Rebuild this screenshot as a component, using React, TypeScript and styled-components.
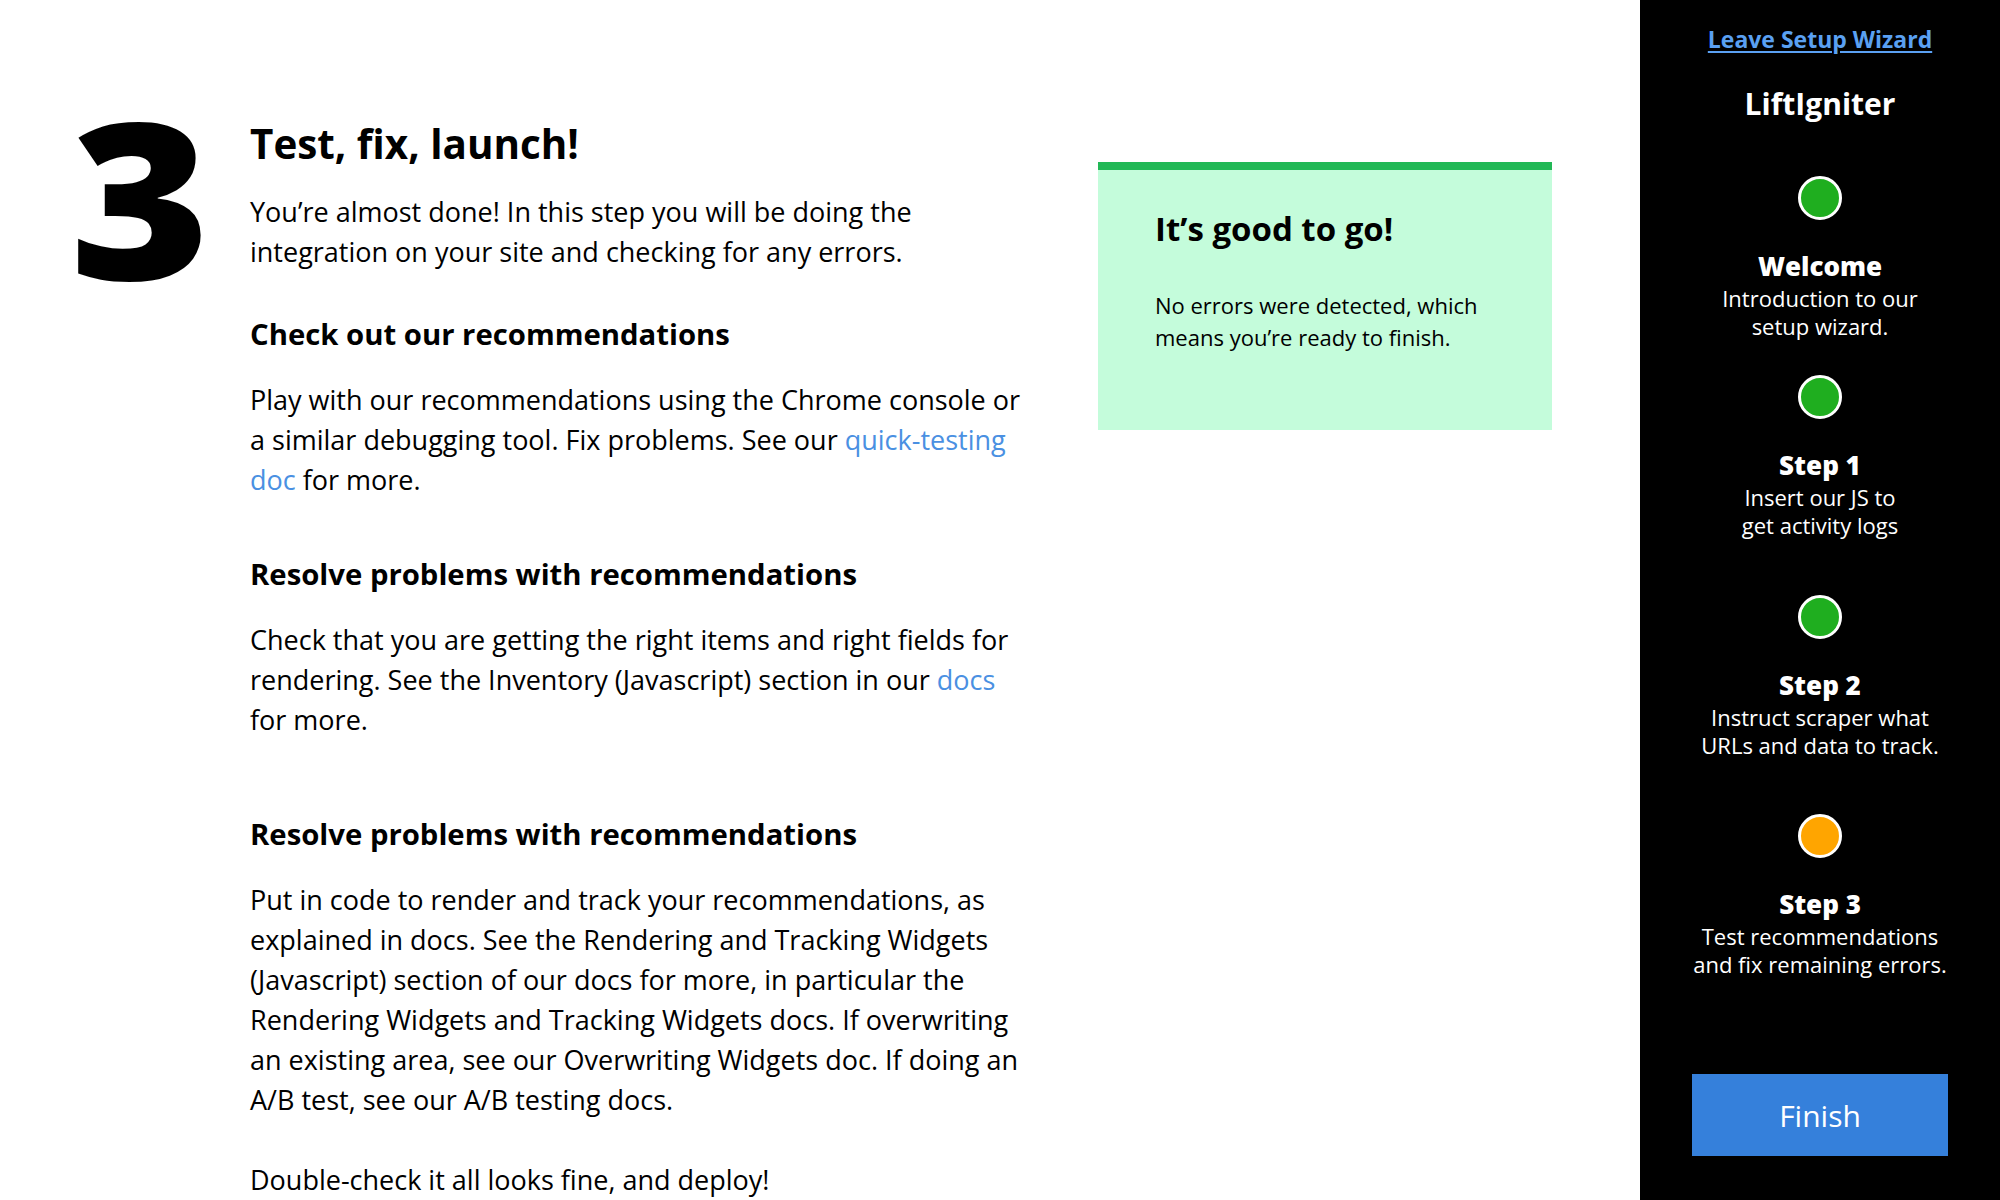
import React from 'react'
import styled, {createGlobalStyle} from 'styled-components'

const GlobalStyle = createGlobalStyle`
  html, body {
    margin: 0;
    padding: 0;
    background: #fff;
  }
  body {
    font-family: 'Open Sans', 'Liberation Sans', sans-serif;
    color: #000;
  }
`

const Page = styled.div`
  display: flex;
  width: 2000px;
  height: 1200px;
  overflow: hidden;
`

/* Left: the step content */

const Main = styled.main`
  flex: 1;
  display: flex;
  align-items: flex-start;
  padding: 85px 0 0 70px;
`

const StepNumber = styled.div`
  width: 180px;
  flex-shrink: 0;
  font-size: 218px;
  line-height: 222px;
  font-weight: 800;
  transform: scaleX(1.1);
  transform-origin: left top;
`

const Content = styled.section`
  width: 778px;
  flex-shrink: 0;
  margin-top: 35px;
`

const Title = styled.h1`
  margin: 0;
  font-size: 40.4px;
  line-height: 48px;
  font-weight: 700;
`

const Heading = styled.h2<{$space: number}>`
  margin: ${p => p.$space}px 0 0;
  font-size: 29.3px;
  line-height: 36px;
  font-weight: 700;
`

const Paragraph = styled.p<{$space: number}>`
  margin: ${p => p.$space}px 0 0;
  font-size: 27px;
  line-height: 40px;
`

const DocLink = styled.a`
  color: #4a90e2;
  text-decoration: none;
`

const StatusCard = styled.aside`
  width: 454px;
  height: 268px;
  box-sizing: border-box;
  flex-shrink: 0;
  margin: 77px 0 0 70px;
  padding: 39px 40px 0 57px;
  background: #c4fcdb;
  border-top: 8px solid #22b856;
`

const CardTitle = styled.h3`
  margin: 0;
  font-size: 33px;
  line-height: 40px;
  font-weight: 700;
`

const CardText = styled.p`
  margin: 40px 0 0;
  font-size: 22px;
  line-height: 32px;
`

/* Right: wizard progress */

const Sidebar = styled.nav`
  width: 360px;
  height: 1200px;
  box-sizing: border-box;
  flex-shrink: 0;
  display: flex;
  flex-direction: column;
  align-items: center;
  padding: 25px 0 44px;
  background: #000;
  color: #fff;
`

const LeaveLink = styled.a`
  font-size: 23px;
  line-height: 28px;
  font-weight: 700;
  color: #5aa0f2;
  text-decoration: underline;
  text-underline-offset: 3px;
`

const Brand = styled.div`
  margin-top: 33px;
  font-size: 30px;
  line-height: 36px;
  font-weight: 700;
`

const StepList = styled.ol`
  list-style: none;
  margin: 54px 0 0;
  padding: 0;
  display: flex;
  flex-direction: column;
  align-items: center;
`

const StepItem = styled.li<{$gap: number}>`
  display: flex;
  flex-direction: column;
  align-items: center;
  text-align: center;
  margin-bottom: ${p => p.$gap}px;
`

const Dot = styled.span<{$color: string}>`
  width: 44px;
  height: 44px;
  box-sizing: border-box;
  border-radius: 50%;
  border: 3px solid #fff;
  background: ${p => p.$color};
`

const StepTitle = styled.div`
  margin-top: 30px;
  font-size: 26px;
  line-height: 32px;
  font-weight: 800;
`

const StepText = styled.div`
  margin-top: 2px;
  font-size: 22px;
  line-height: 28px;
`

const FinishButton = styled.button`
  margin-top: auto;
  width: 256px;
  height: 82px;
  border: 0;
  padding: 0;
  background: #3580db;
  color: #fff;
  font-family: inherit;
  font-size: 30px;
  cursor: pointer;
`

const GREEN = '#1fae1f'
const ORANGE = '#ffa500'

const steps = [
    {title: 'Welcome', lines: ['Introduction to our', 'setup wizard.'], color: GREEN, gap: 35},
    {title: 'Step 1', lines: ['Insert our JS to', 'get activity logs'], color: GREEN, gap: 56},
    {title: 'Step 2', lines: ['Instruct scraper what', 'URLs and data to track.'], color: GREEN, gap: 55},
    {title: 'Step 3', lines: ['Test recommendations', 'and fix remaining errors.'], color: ORANGE, gap: 0},
]

const App: React.FC = () => {
    return <Page>
        <GlobalStyle/>
        <Main>
            <StepNumber>3</StepNumber>
            <Content>
                <Title>Test, fix, launch!</Title>
                <Paragraph $space={24}>
                    You’re almost done! In this step you will be doing the integration on your site and checking for
                    any errors.
                </Paragraph>

                <Heading $space={44}>Check out our recommendations</Heading>
                <Paragraph $space={28}>
                    Play with our recommendations using the Chrome console or a similar debugging tool. Fix
                    problems. See our <DocLink href="#">quick-testing doc</DocLink> for more.
                </Paragraph>

                <Heading $space={56}>Resolve problems with recommendations</Heading>
                <Paragraph $space={28}>
                    Check that you are getting the right items and right fields for rendering. See the Inventory
                    (Javascript) section in our <DocLink href="#">docs</DocLink> for more.
                </Paragraph>

                <Heading $space={76}>Resolve problems with recommendations</Heading>
                <Paragraph $space={28}>
                    Put in code to render and track your recommendations, as explained in docs. See the Rendering
                    and Tracking Widgets (Javascript) section of our docs for more, in particular the Rendering
                    Widgets and Tracking Widgets docs. If overwriting an existing area, see our Overwriting Widgets
                    doc. If doing an A/B test, see our A/B testing docs.
                </Paragraph>
                <Paragraph $space={40}>Double-check it all looks fine, and deploy!</Paragraph>
            </Content>
            <StatusCard>
                <CardTitle>It’s good to go!</CardTitle>
                <CardText>No errors were detected, which means you’re ready to finish.</CardText>
            </StatusCard>
        </Main>

        <Sidebar>
            <LeaveLink href="#">Leave Setup Wizard</LeaveLink>
            <Brand>LiftIgniter</Brand>
            <StepList>
                {steps.map(step => <StepItem key={step.title} $gap={step.gap}>
                    <Dot $color={step.color}/>
                    <StepTitle>{step.title}</StepTitle>
                    <StepText>
                        {step.lines.map((line, i) => <React.Fragment key={line}>
                            {i > 0 && <br/>}
                            {line}
                        </React.Fragment>)}
                    </StepText>
                </StepItem>)}
            </StepList>
            <FinishButton>Finish</FinishButton>
        </Sidebar>
    </Page>
}

export default App
